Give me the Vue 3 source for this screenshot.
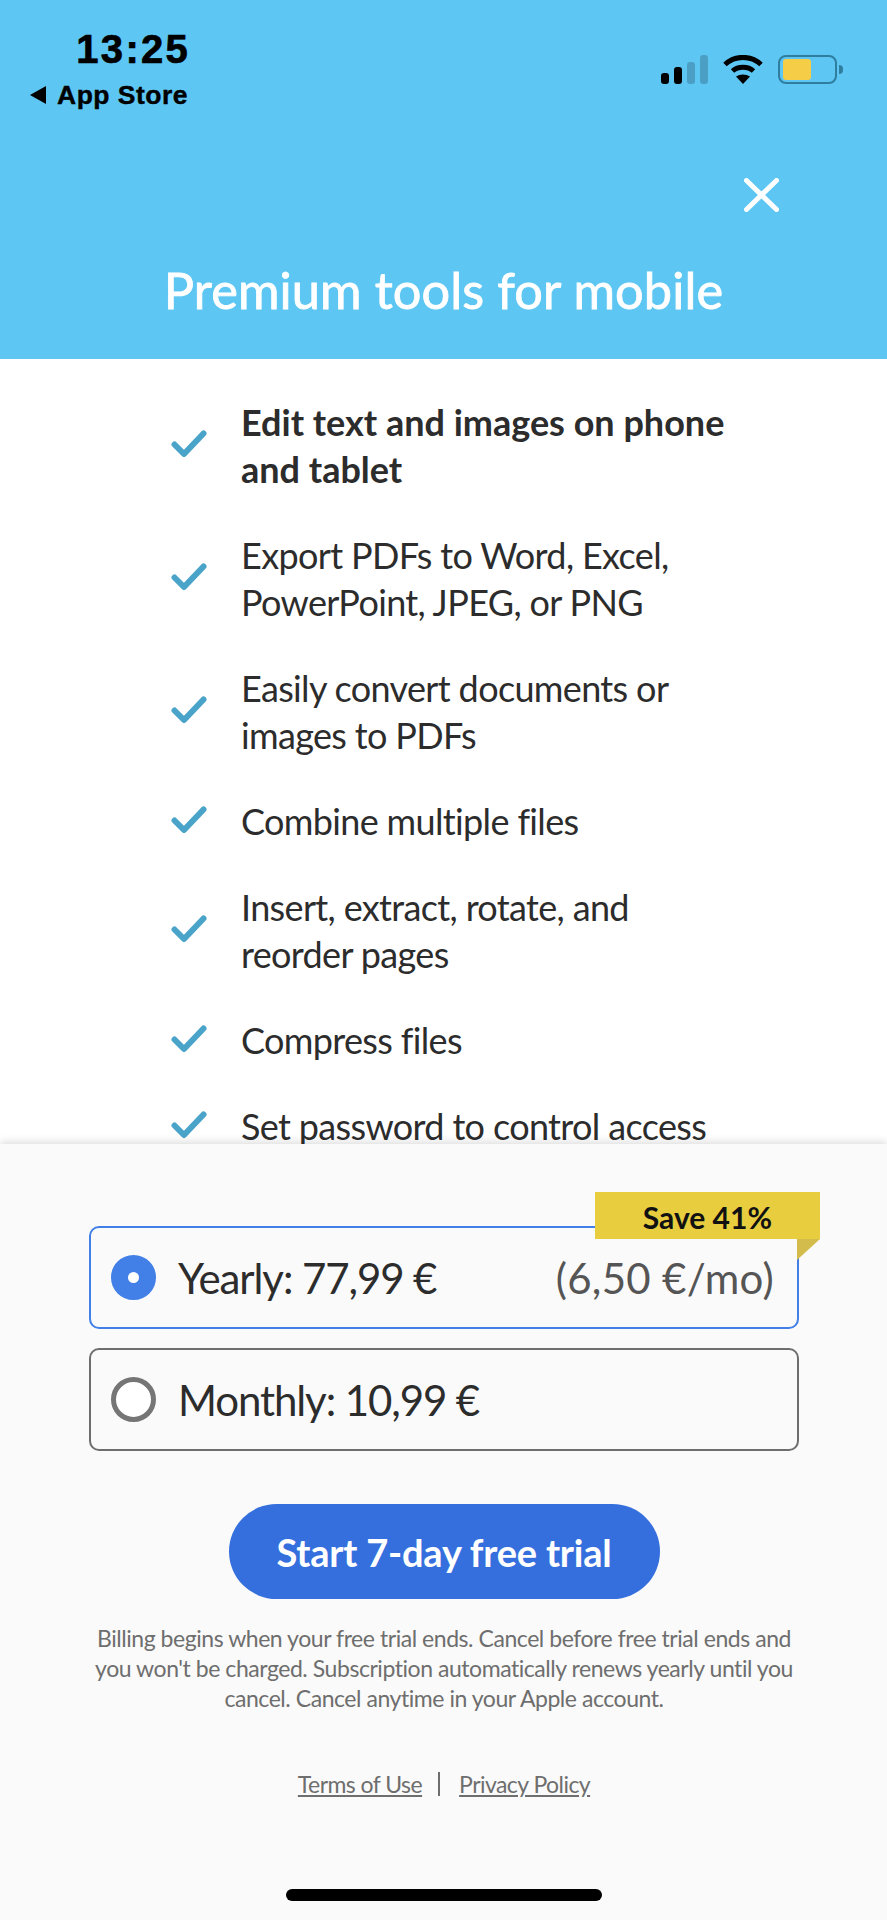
<template>
  <div class="paywall">
    <header class="hero">
      <div class="status">
        <div class="status-left">
          <span class="time">13:25</span>
          <span class="back"><i class="back-arrow"></i>App Store</span>
        </div>
        <div class="status-right">
          <div class="signal">
            <span v-for="(b, i) in signalBars" :key="i" :class="{ dim: i > 1 }" :style="{ height: b + 'px' }"></span>
          </div>
          <svg class="wifi" width="40" height="29" viewBox="0 0 40 29">
            <path d="M2 9.5C12 0 28 0 38 9.5" fill="none" stroke="#000" stroke-width="5" />
            <path d="M9.5 16C15 11 25 11 30.5 16" fill="none" stroke="#000" stroke-width="5" />
            <path d="M13 21.5C17 18.7 23 18.7 27 21.5L20 29Z" fill="#000" />
          </svg>
          <div class="battery"><span class="battery-fill"></span></div>
          <span class="battery-nub"></span>
        </div>
      </div>
      <div class="close-row">
        <svg width="35" height="34" viewBox="0 0 35 34">
          <path d="M2.5 2.5L32.5 31.5M32.5 2.5L2.5 31.5" stroke="#fff" stroke-width="5" stroke-linecap="round" />
        </svg>
      </div>
      <h1>Premium tools for mobile</h1>
    </header>

    <ul class="features">
      <li v-for="(f, i) in features" :key="f" :class="{ strong: i === 0 }">
        <svg class="check" width="36" height="28" viewBox="0 0 36 28">
          <path d="M3.5 14.5L13 24L32.5 3.5" fill="none" stroke="#4aa3c9" stroke-width="6" stroke-linecap="round" stroke-linejoin="round" />
        </svg>
        <span v-html="f"></span>
      </li>
    </ul>

    <footer class="bottom">
      <div class="plan active">
        <span class="radio on"></span>
        <span class="plan-name">Yearly: 77,99 €</span>
        <span class="plan-per">(6,50 €/mo)</span>
        <div class="badge">Save 41%</div>
        <div class="badge-fold"></div>
      </div>
      <div class="plan">
        <span class="radio"></span>
        <span class="plan-name">Monthly: 10,99 €</span>
      </div>
      <button class="cta">Start 7-day free trial</button>
      <p class="legal">
        Billing begins when your free trial ends. Cancel before free trial ends and<br />
        you won't be charged. Subscription automatically renews yearly until you<br />
        cancel. Cancel anytime in your Apple account.
      </p>
      <div class="links">
        <a>Terms of Use</a>
        <span class="sep"></span>
        <a>Privacy Policy</a>
      </div>
      <div class="home-bar"></div>
    </footer>
  </div>
</template>

<script setup>
const signalBars = [11, 17, 22, 29];

const features = [
  "Edit text and images on phone<br>and tablet",
  "Export PDFs to Word, Excel,<br>PowerPoint, JPEG, or PNG",
  "Easily convert documents or<br>images to PDFs",
  "Combine multiple files",
  "Insert, extract, rotate, and<br>reorder pages",
  "Compress files",
  "Set password to control access",
];
</script>

<style>
html,
body {
  margin: 0;
  background: #fff;
}
</style>

<style scoped>
.paywall {
  width: 887px;
  height: 1920px;
  display: flex;
  flex-direction: column;
  overflow: hidden;
  font-family: Lato, "Open Sans", sans-serif;
  color: #2c2c2c;
}

.hero {
  height: 359px;
  flex: none;
  background: #5dc6f3;
  color: #fff;
}

.status {
  display: flex;
  justify-content: space-between;
  padding: 27px 44px 0 30px;
  color: #000;
  font-family: "Liberation Sans", Arial, sans-serif;
  font-weight: 700;
}

.status-left {
  display: flex;
  flex-direction: column;
  align-items: flex-end;
}

.time {
  font-size: 40px;
  line-height: 44px;
  letter-spacing: 2.3px;
  margin-right: -2px;
  -webkit-text-stroke: 0.7px #000;
}

.back {
  display: flex;
  align-items: center;
  font-size: 26.5px;
  line-height: 30px;
  margin-top: 9px;
  letter-spacing: 0.5px;
  -webkit-text-stroke: 0.4px #000;
}

.back-arrow {
  width: 0;
  height: 0;
  border-top: 9px solid transparent;
  border-bottom: 9px solid transparent;
  border-right: 16px solid #000;
  margin-right: 11px;
}

.status-right {
  display: flex;
  align-items: flex-end;
  height: 29px;
  margin-top: 28px;
}

.signal {
  display: flex;
  align-items: flex-end;
  gap: 5px;
  margin-right: 15px;
}

.signal span {
  width: 8px;
  background: #000;
  border-radius: 3px;
}

.signal span.dim {
  background: #4b9fc4;
}

.wifi {
  margin-right: 15px;
}

.battery {
  width: 59px;
  height: 29px;
  box-sizing: border-box;
  border: 2.5px solid #2f7ea0;
  border-radius: 8px;
  padding: 2px 3px;
}

.battery-fill {
  display: block;
  width: 28px;
  height: 100%;
  background: #f5cd47;
  border-radius: 3px;
}

.battery-nub {
  width: 4px;
  height: 9px;
  background: #2f7ea0;
  border-radius: 0 4px 4px 0;
  margin: 0 0 10px 2px;
}

.close-row {
  display: flex;
  justify-content: flex-end;
  padding: 68px 108px 0 0;
  height: 34px;
}

h1 {
  margin: 48px 0 0;
  text-align: center;
  font-size: 50.5px;
  line-height: 60px;
  font-weight: 400;
  letter-spacing: 0.1px;
  -webkit-text-stroke: 0.8px #fff;
}

.features {
  flex: 1;
  min-height: 0;
  margin: 0;
  padding: 40px 0 0 171px;
  list-style: none;
  display: flex;
  flex-direction: column;
  gap: 39px;
  overflow: hidden;
  font-size: 36px;
  line-height: 47px;
  letter-spacing: -0.65px;
}

.features li {
  display: flex;
  align-items: center;
  flex: none;
}

.features li.strong {
  font-weight: 700;
  letter-spacing: 0;
}

.check {
  flex: none;
  margin: 0 34px 4px 0;
}

.bottom {
  position: relative;
  height: 776px;
  flex: none;
  box-sizing: border-box;
  padding: 82px 88px 0 89px;
  background: #fafafa;
  box-shadow: 0 -2px 8px rgba(0, 0, 0, 0.14);
  display: flex;
  flex-direction: column;
}

.plan {
  position: relative;
  height: 103px;
  box-sizing: border-box;
  display: flex;
  align-items: center;
  padding: 0 23px 0 20px;
  border: 2px solid #6e6e6e;
  border-radius: 10px;
  font-size: 42px;
  margin-bottom: 19px;
}

.plan.active {
  border-color: #4280e8;
}

.plan-name {
  letter-spacing: -1.1px;
}

.radio {
  width: 45px;
  height: 45px;
  box-sizing: border-box;
  flex: none;
  border-radius: 50%;
  border: 5px solid #757575;
  background: #fff;
  margin-right: 22px;
}

.radio.on {
  border: 17px solid #4280e8;
}

.plan-per {
  margin-left: auto;
  color: #555;
  letter-spacing: 0.3px;
}

.badge {
  position: absolute;
  top: -36px;
  right: -23px;
  width: 225px;
  height: 47px;
  box-sizing: border-box;
  padding-right: 48px;
  background: #e8cd3f;
  color: #111;
  font-size: 30px;
  font-weight: 700;
  line-height: 50px;
  text-align: right;
}

.badge-fold {
  position: absolute;
  top: 11px;
  right: -23px;
  width: 0;
  height: 0;
  border-top: 21px solid #d4bc4c;
  border-right: 23px solid transparent;
}

.cta {
  align-self: center;
  width: 431px;
  height: 95px;
  margin-top: 34px;
  border: 0;
  border-radius: 48px;
  background: #356fdd;
  color: #fff;
  font-family: inherit;
  font-size: 38px;
  font-weight: 700;
  letter-spacing: -0.2px;
}

.legal {
  margin: 24px -10px 0;
  text-align: center;
  font-size: 23px;
  line-height: 30px;
  letter-spacing: -0.45px;
  white-space: nowrap;
  color: #6e6e6e;
}

.links {
  display: flex;
  justify-content: center;
  align-items: center;
  margin-top: 56px;
  font-size: 23px;
  line-height: 30px;
  letter-spacing: -0.55px;
  color: #6e6e6e;
}

.links a {
  text-decoration: underline;
}

.sep {
  width: 2px;
  height: 24px;
  background: #6e6e6e;
  margin: 0 19px 0 16px;
}

.home-bar {
  align-self: center;
  width: 316px;
  height: 12px;
  margin-top: auto;
  margin-bottom: 19px;
  border-radius: 6px;
  background: #000;
}
</style>
